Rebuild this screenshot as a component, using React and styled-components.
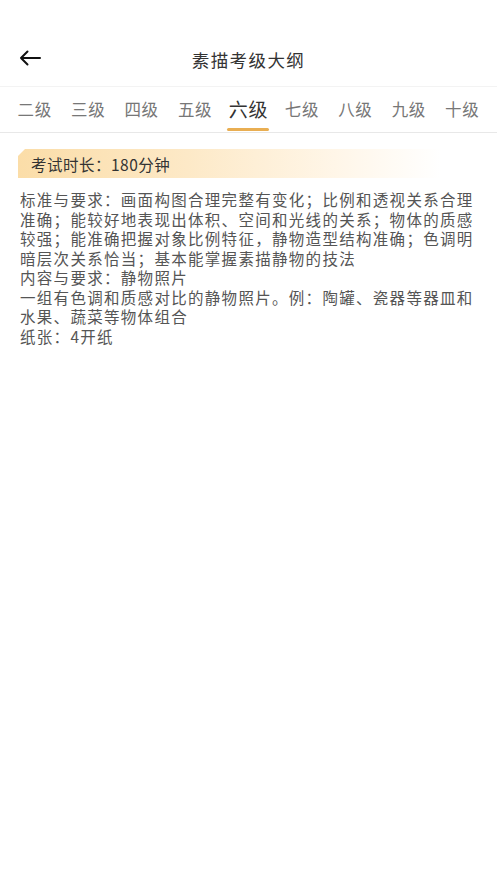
import styled, { createGlobalStyle } from "styled-components"
import { useState } from "react"

const GlobalStyle = createGlobalStyle`
  html, body {
    margin: 0;
    padding: 0;
    background: #fff;
    font-family: "Noto Sans CJK SC", "Noto Sans", sans-serif;
  }
`

const levels = ["二级", "三级", "四级", "五级", "六级", "七级", "八级", "九级", "十级"]

const paragraphs = [
  "标准与要求：画面构图合理完整有变化；比例和透视关系合理准确；能较好地表现出体积、空间和光线的关系；物体的质感较强；能准确把握对象比例特征，静物造型结构准确；色调明暗层次关系恰当；基本能掌握素描静物的技法",
  "内容与要求：静物照片",
  "一组有色调和质感对比的静物照片。例：陶罐、瓷器等器皿和水果、蔬菜等物体组合",
  "纸张：4开纸",
]

const App = () => {
  const [active, setActive] = useState(4)
  return (
    <Page>
      <GlobalStyle />
      <Header>
        <BackButton aria-label="back">
          <svg width="22" height="16" viewBox="0 0 22 16" fill="none">
            <path d="M21 8H2M8.5 1.5L2 8l6.5 6.5" stroke="#111" strokeWidth="2" strokeLinecap="round" strokeLinejoin="round" />
          </svg>
        </BackButton>
        <Title>素描考级大纲</Title>
      </Header>
      <Tabs>
        {levels.map((l, i) => (
          <Tab key={l} $active={i === active} onClick={() => setActive(i)}>
            {l}
          </Tab>
        ))}
      </Tabs>
      <Content>
        <Banner>考试时长：180分钟</Banner>
        <Body>
          {paragraphs.map((p) => (
            <p key={p}>{p}</p>
          ))}
        </Body>
      </Content>
    </Page>
  )
}
export default App

const Page = styled.div`
  width: 497px;
  min-height: 883px;
  background: #fff;
`

const Header = styled.div`
  position: relative;
  height: 87px;
  padding-top: 35px;
  box-sizing: border-box;
  display: flex;
  align-items: center;
  justify-content: center;
  border-bottom: 1px solid #f3f3f3;
`

const BackButton = styled.div`
  position: absolute;
  left: 19px;
  top: 50px;
  width: 22px;
  height: 16px;
  display: flex;
`

const Title = styled.div`
  font-size: 17.5px;
  letter-spacing: 1.4px;
  color: #333;
  margin-top: -2px;
`

const Tabs = styled.div`
  display: flex;
  padding: 0 8px;
  height: 45px;
  border-bottom: 1px solid #e8e8e8;
`

const Tab = styled.div`
  position: relative;
  flex: 1;
  display: flex;
  align-items: center;
  justify-content: center;
  font-size: ${(p) => (p.$active ? "19px" : "16.5px")};
  letter-spacing: 0.6px;
  color: ${(p) => (p.$active ? "#333" : "#777")};
  padding-bottom: 2px;
  cursor: pointer;
  &::after {
    content: "";
    display: ${(p) => (p.$active ? "block" : "none")};
    position: absolute;
    left: 50%;
    transform: translateX(-50%);
    bottom: 1px;
    width: 42px;
    height: 3px;
    border-radius: 2px;
    background: #e9ae52;
  }
`

const Content = styled.div`
  padding: 16px 20px 0 20px;
`

const Banner = styled.div`
  margin-left: -2px;
  width: 410px;
  height: 29px;
  padding-left: 13px;
  display: flex;
  align-items: center;
  font-size: 15.5px;
  letter-spacing: 0.5px;
  color: #333;
  background: linear-gradient(90deg, #fbdda8 0%, #fde9c7 40%, #fff6e8 75%, #ffffff 100%);
  clip-path: polygon(7px 0, 100% 0, 100% 100%, 0 100%, 0 7px);
`

const Body = styled.div`
  margin-top: 12px;
  font-size: 15.5px;
  letter-spacing: 1.3px;
  line-height: 19.5px;
  color: #555;
  p {
    margin: 0;
  }
`
